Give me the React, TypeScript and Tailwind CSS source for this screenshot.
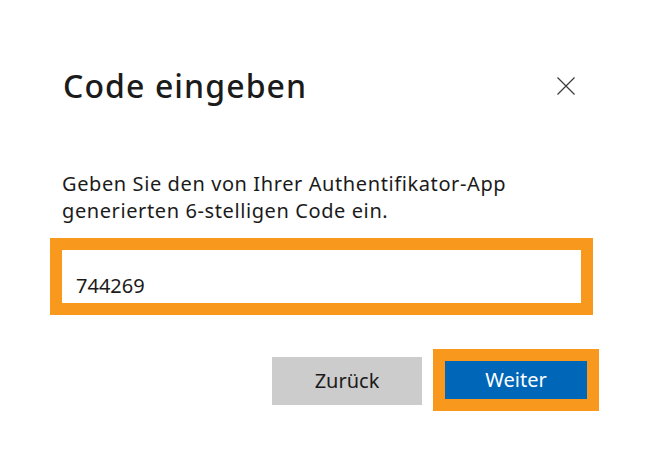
export default function App() {
  return (
    <div className="h-[458px] w-[651px] bg-white font-['Noto_Sans',sans-serif] text-[#1b1b1b]">
      <div className="flex items-start justify-between pl-[63px] pr-[76px] pt-[66px]">
        <h1 className="text-[32px] font-medium leading-[40px] tracking-[1.1px]">Code eingeben</h1>
        <svg className="mt-[11px] h-[18px] w-[18px]" viewBox="0 0 18 18" fill="none" stroke="#3b3b3b" strokeWidth="1.2">
          <path d="M0.5 0.5L17.5 17.5M17.5 0.5L0.5 17.5" />
        </svg>
      </div>

      <p className="mt-[64px] pl-[62px] text-[20px] leading-[27px] tracking-[0.6px]">
        Geben Sie den von Ihrer Authentifikator-App
        <br />
        generierten 6-stelligen Code ein.
      </p>

      <div className="ml-[50px] mt-[14px] w-[543px] border-[12px] border-[#f8981d]">
        <div className="flex h-[53px] items-end pb-[4px] pl-[14px] text-[20px] leading-[27px]">744269</div>
      </div>

      <div className="mt-[34px] flex items-start justify-end gap-[11px] pr-[52px]">
        <button className="mt-[8px] h-[48px] w-[150px] bg-[#cccccc] text-[20px] text-[#1b1b1b]">Zurück</button>
        <div className="border-[12px] border-[#f8981d]">
          <button className="block h-[38px] w-[142px] bg-[#0067b8] text-[20px] text-white">Weiter</button>
        </div>
      </div>
    </div>
  );
}
